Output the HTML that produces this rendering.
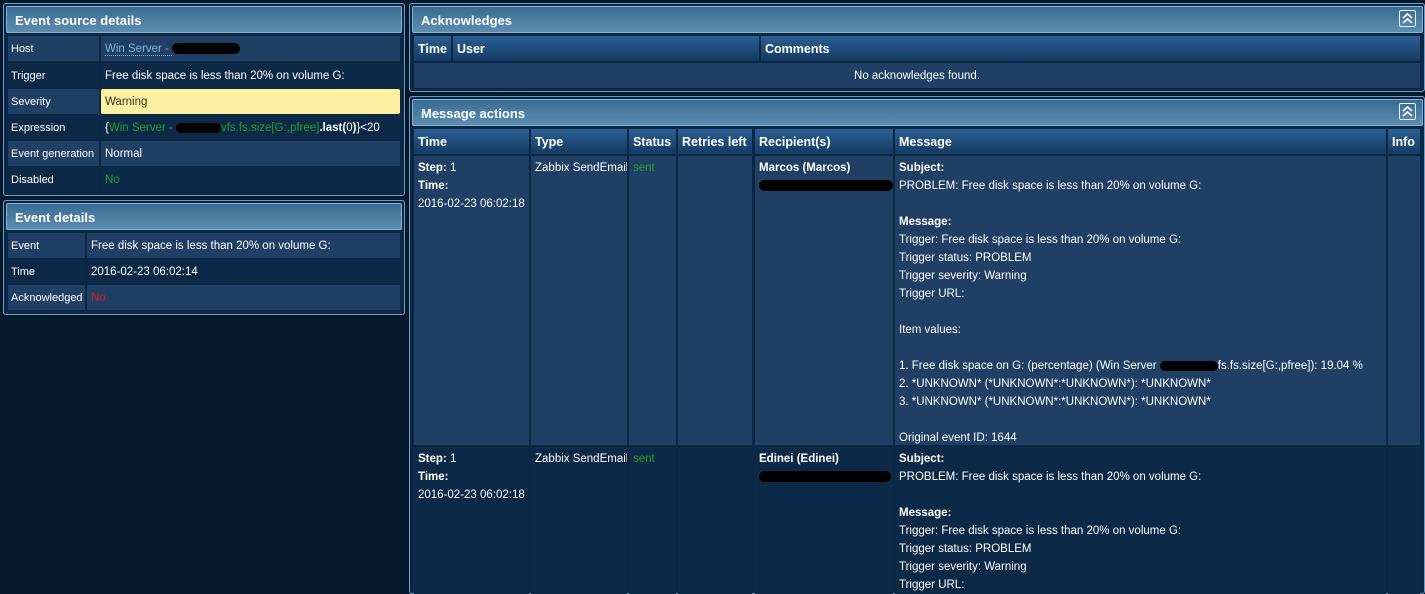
<!DOCTYPE html>
<html><head><meta charset="utf-8"><style>
*{margin:0;padding:0;box-sizing:border-box}
html{width:1425px;height:594px;overflow:hidden}
body{width:1425px;height:594px;background:#06182b;overflow:hidden;position:relative;font-family:"Liberation Sans",Tahoma,sans-serif;font-size:11.5px;color:#fff}
.p{position:absolute;background:#0b2743;border:1px solid #6f9ec0;border-radius:3px}
.h{position:absolute;background:linear-gradient(#3a6b93,#5c8db0);border:1px solid #8bb3cf;border-radius:2px;font-weight:bold;font-size:13px;padding:6px 0 0 8px;color:#fff}
.c{position:absolute;background:#1f4064;padding:7px 0 0 4px;white-space:nowrap;overflow:hidden}
.k{font-size:11px;padding-left:3px}
.d{background:#0c2a47}
.th{position:absolute;background:linear-gradient(#2b5f93,#143b62);font-weight:bold;font-size:12.5px;padding:6px 0 0 4px;white-space:nowrap;overflow:hidden}
.g{color:#22a02a}.r{color:#d81a1a}
.blk{display:inline-block;background:#000;border-radius:6px;vertical-align:middle}
.ic{position:absolute;width:17px;height:17px;border:1px solid #e8f2fa;border-radius:2px}
.l{line-height:18px;padding-top:3px}
</style></head><body>

<div class="p" style="left:3px;top:3px;width:402px;height:193px"></div>
<div class="h" style="left:6px;top:6px;width:396px;height:27px">Event source details</div>
<div class="c k" style="left:8px;top:36px;width:91px;height:25px">Host</div>
<div class="c" style="left:101px;top:36px;width:299px;height:25px"><span style="color:#79b5e6;border-bottom:1px dotted #79b5e6">Win Server - </span><span class="blk" style="width:68px;height:11px"></span></div>
<div class="c d k" style="left:8px;top:63px;width:91px;height:25px">Trigger</div>
<div class="c d" style="left:101px;top:63px;width:299px;height:25px">Free disk space is less than 20% on volume G:</div>
<div class="c k" style="left:8px;top:89px;width:91px;height:25px">Severity</div>
<div class="c" style="left:101px;top:89px;width:299px;height:25px;background:#fdf0a0;color:#333;border-radius:2px">Warning</div>
<div class="c d k" style="left:8px;top:115px;width:91px;height:25px">Expression</div>
<div class="c d" style="left:101px;top:115px;width:299px;height:25px">{<span class="g">Win Server - </span><span class="blk" style="width:45px;height:10px"></span><span class="g">vfs.fs.size[G:,pfree]</span><b>.last(</b>0<b>)</b>}&lt;20</div>
<div class="c k" style="left:8px;top:141px;width:91px;height:25px">Event generation</div>
<div class="c" style="left:101px;top:141px;width:299px;height:25px">Normal</div>
<div class="c d k" style="left:8px;top:167px;width:91px;height:25px">Disabled</div>
<div class="c d" style="left:101px;top:167px;width:299px;height:25px"><span class="g">No</span></div>

<div class="p" style="left:3px;top:200px;width:402px;height:115px"></div>
<div class="h" style="left:6px;top:203px;width:396px;height:27px">Event details</div>
<div class="c k" style="left:8px;top:233px;width:77px;height:25px">Event</div>
<div class="c" style="left:87px;top:233px;width:313px;height:25px">Free disk space is less than 20% on volume G:</div>
<div class="c d k" style="left:8px;top:259px;width:77px;height:25px">Time</div>
<div class="c d" style="left:87px;top:259px;width:313px;height:25px">2016-02-23 06:02:14</div>
<div class="c k" style="left:8px;top:285px;width:77px;height:25px">Acknowledged</div>
<div class="c" style="left:87px;top:285px;width:313px;height:25px"><span class="r">No</span></div>

<div class="p" style="left:409px;top:3px;width:1016px;height:89px"></div>
<div class="h" style="left:412px;top:6px;width:1011px;height:27px">Acknowledges</div>
<div class="ic" style="left:1399px;top:10px"><svg width="15" height="15" viewBox="0 0 15 15"><path d="M3 7 L7.5 3 L12 7 M3 12 L7.5 8 L12 12" stroke="#fff" stroke-width="1.6" fill="none"/></svg></div>
<div class="th" style="left:414px;top:36px;width:37px;height:25px">Time</div>
<div class="th" style="left:453px;top:36px;width:306px;height:25px">User</div>
<div class="th" style="left:761px;top:36px;width:659px;height:25px">Comments</div>
<div class="c" style="left:414px;top:63px;width:1006px;height:25px;text-align:center;padding-left:0">No acknowledges found.</div>

<div class="p" style="left:409px;top:96px;width:1016px;height:498px"></div>
<div class="h" style="left:412px;top:99px;width:1011px;height:27px">Message actions</div>
<div class="ic" style="left:1399px;top:103px"><svg width="15" height="15" viewBox="0 0 15 15"><path d="M3 7 L7.5 3 L12 7 M3 12 L7.5 8 L12 12" stroke="#fff" stroke-width="1.6" fill="none"/></svg></div>
<div class="th" style="left:414px;top:129px;width:115px;height:25px">Time</div>
<div class="th" style="left:531px;top:129px;width:96px;height:25px">Type</div>
<div class="th" style="left:629px;top:129px;width:47px;height:25px">Status</div>
<div class="th" style="left:678px;top:129px;width:74px;height:25px">Retries left</div>
<div class="th" style="left:755px;top:129px;width:138px;height:25px">Recipient(s)</div>
<div class="th" style="left:895px;top:129px;width:491px;height:25px">Message</div>
<div class="th" style="left:1388px;top:129px;width:32px;height:25px">Info</div>

<div class="c l" style="left:414px;top:156px;width:115px;height:289px"><b>Step:</b> 1<br><b>Time:</b><br>2016-02-23 06:02:18</div>
<div class="c l" style="left:531px;top:156px;width:96px;height:289px">Zabbix SendEmail</div>
<div class="c l" style="left:629px;top:156px;width:47px;height:289px"><span class="g">sent</span></div>
<div class="c l" style="left:678px;top:156px;width:74px;height:289px"></div>
<div class="c l" style="left:755px;top:156px;width:138px;height:289px"><b>Marcos (Marcos)</b><br><span class="blk" style="width:134px;height:11px"></span></div>
<div class="c l" style="left:895px;top:156px;width:491px;height:289px"><b>Subject:</b><br>PROBLEM: Free disk space is less than 20% on volume G:<br><br><b>Message:</b><br>Trigger: Free disk space is less than 20% on volume G:<br>Trigger status: PROBLEM<br>Trigger severity: Warning<br>Trigger URL:<br><br>Item values:<br><br>1. Free disk space on G: (percentage) (Win Server <span class="blk" style="width:58px;height:10px"></span>fs.fs.size[G:,pfree]): 19.04 %<br>2. *UNKNOWN* (*UNKNOWN*:*UNKNOWN*): *UNKNOWN*<br>3. *UNKNOWN* (*UNKNOWN*:*UNKNOWN*): *UNKNOWN*<br><br>Original event ID: 1644</div>
<div class="c l" style="left:1388px;top:156px;width:32px;height:289px"></div>

<div class="c d l" style="left:414px;top:447px;width:115px;height:147px"><b>Step:</b> 1<br><b>Time:</b><br>2016-02-23 06:02:18</div>
<div class="c d l" style="left:531px;top:447px;width:96px;height:147px">Zabbix SendEmail</div>
<div class="c d l" style="left:629px;top:447px;width:47px;height:147px"><span class="g">sent</span></div>
<div class="c d l" style="left:678px;top:447px;width:74px;height:147px"></div>
<div class="c d l" style="left:755px;top:447px;width:138px;height:147px"><b>Edinei (Edinei)</b><br><span class="blk" style="width:132px;height:11px"></span></div>
<div class="c d l" style="left:895px;top:447px;width:491px;height:147px"><b>Subject:</b><br>PROBLEM: Free disk space is less than 20% on volume G:<br><br><b>Message:</b><br>Trigger: Free disk space is less than 20% on volume G:<br>Trigger status: PROBLEM<br>Trigger severity: Warning<br>Trigger URL:</div>
<div class="c d l" style="left:1388px;top:447px;width:32px;height:147px"></div>
</body></html>
